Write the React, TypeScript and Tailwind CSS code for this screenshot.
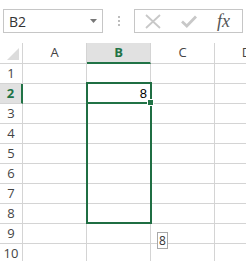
import React from 'react';

const GREEN = '#217346';
const cols = ['A', 'B', 'C', 'D'];
const rows = [1, 2, 3, 4, 5, 6, 7, 8, 9, 10];

function Toolbar() {
  return (
    <div className="flex h-[43px] items-start pt-[9px] pl-[3px]">
      {/* name box */}
      <div className="flex h-[24px] w-[100px] items-center justify-between border border-[#c6c6c6] bg-white pl-[5px] pr-[5px]">
        <span className="text-[14px] text-[#333]" style={{ fontFamily: '"Open Sans", "Noto Sans", sans-serif' }}>
          B2
        </span>
        <svg width="7" height="4" viewBox="0 0 7 4">
          <polygon points="0,0 7,0 3.5,4" fill="#777" />
        </svg>
      </div>
      {/* splitter dots */}
      <div className="flex h-[24px] w-[31px] flex-col items-center justify-center gap-[2px]">
        <div className="h-[2px] w-[2px] bg-[#bdbdbd]" />
        <div className="h-[2px] w-[2px] bg-[#bdbdbd]" />
        <div className="h-[2px] w-[2px] bg-[#bdbdbd]" />
      </div>
      {/* formula buttons */}
      <div className="flex h-[24px] w-[109px] items-center border border-[#c6c6c6] bg-white">
        <svg className="ml-[10px]" width="16" height="15" viewBox="0 0 16 15">
          <path d="M1 1 L15 14 M15 1 L1 14" stroke="#c8c8c8" strokeWidth="1.8" fill="none" />
        </svg>
        <svg className="ml-[20px]" width="16" height="13" viewBox="0 0 16 13">
          <path d="M1 6.5 L5.8 11 L15 1.5" stroke="#c8c8c8" strokeWidth="2.8" fill="none" />
        </svg>
        <span
          className="ml-[20px] text-[18px] italic leading-none text-[#555]"
          style={{ fontFamily: '"Liberation Serif", "DejaVu Serif", serif' }}
        >
          fx
        </span>
      </div>
    </div>
  );
}

function Grid() {
  const headFont = { fontFamily: '"Open Sans", "Noto Sans", sans-serif' };
  return (
    <div className="relative">
      <div className="grid grid-cols-[23px_64px_64px_64px_64px] grid-rows-[21px_repeat(10,20px)]">
        {/* corner */}
        <div className="relative border-r border-b border-[#d4d4d4] bg-white">
          <svg className="absolute right-[3px] bottom-[3px]" width="12" height="12" viewBox="0 0 12 12">
            <polygon points="12,0 12,12 0,12" fill="#dcdcdc" />
          </svg>
        </div>
        {cols.map((c) =>
          c === 'B' ? (
            <div
              key={c}
              className="flex items-center justify-center border-r border-[#d4d4d4] border-b-2 border-b-[#217346] bg-[#e1e1e1] text-[13px] font-bold text-[#217346]"
              style={headFont}
            >
              {c}
            </div>
          ) : (
            <div
              key={c}
              className="flex items-center justify-center border-r border-b border-[#d4d4d4] bg-white text-[13px] text-[#444]"
              style={headFont}
            >
              {c}
            </div>
          )
        )}
        {rows.map((r) => (
          <React.Fragment key={r}>
            {r === 2 ? (
              <div
                className="flex items-center justify-center border-b border-[#d4d4d4] border-r-2 border-r-[#217346] bg-[#e1e1e1] text-[13px] font-bold text-[#217346]"
                style={headFont}
              >
                {r}
              </div>
            ) : (
              <div
                className="flex items-center justify-center border-r border-b border-[#d4d4d4] bg-white text-[13px] text-[#444]"
                style={headFont}
              >
                {r}
              </div>
            )}
            {cols.map((c) => (
              <div
                key={c}
                className="flex items-center justify-end border-r border-b border-[#d4d4d4] bg-white pr-[3px] text-[13px] text-black"
                style={{ fontFamily: '"Liberation Sans", Arial, sans-serif' }}
              >
                {c === 'B' && r === 2 ? '8' : ''}
              </div>
            ))}
          </React.Fragment>
        ))}
      </div>

      {/* fill range outline B2:B8 */}
      <div className="pointer-events-none absolute left-[86px] top-[39px] h-[142px] w-[66px] border-[2.5px] border-[#1f6e43]" />
      {/* active cell bottom edge */}
      <div className="absolute left-[86px] top-[59px] h-[2px] w-[66px]" style={{ background: GREEN }} />
      {/* fill handle */}
      <div className="absolute left-[147px] top-[56px] h-[7px] w-[7px] border border-white bg-[#217346]" />
      {/* drag tooltip */}
      <div
        className="absolute left-[157px] top-[189px] flex h-[17px] w-[11px] items-center justify-center border border-[#a9a9a9] bg-white text-[12px] text-[#333]"
        style={{ fontFamily: '"Open Sans", "Noto Sans", sans-serif' }}
      >
        8
      </div>
    </div>
  );
}

export default function App() {
  return (
    <div className="h-[261px] w-[246px] overflow-hidden bg-white">
      <Toolbar />
      <Grid />
    </div>
  );
}
